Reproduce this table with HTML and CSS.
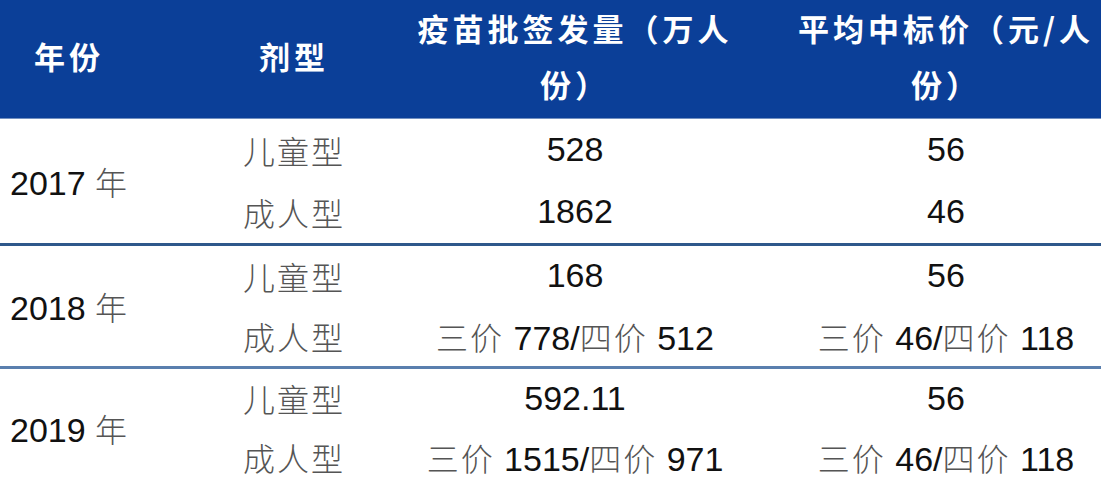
FILE: index.html
```html
<!DOCTYPE html>
<html lang="zh">
<head>
<meta charset="utf-8">
<link rel="stylesheet" href="styles.css">
</head>
<body>
<table class="tbl">
  <colgroup>
    <col class="c1"><col class="c2"><col class="c3"><col class="c4">
  </colgroup>
  <thead>
    <tr>
      <th class="h1">年份</th>
      <th class="h2">剂型</th>
      <th class="h3">疫苗批签发量（万人<br>份）</th>
      <th class="h4">平均中标价（元/人<br>份）</th>
    </tr>
  </thead>
  <tbody class="g1">
    <tr>
      <td class="year" rowspan="2">2017 <span class="cn">年</span></td>
      <td class="type"><span class="cn">儿童型</span></td>
      <td class="v3">528</td>
      <td class="v4">56</td>
    </tr>
    <tr>
      <td class="type"><span class="cn">成人型</span></td>
      <td class="v3">1862</td>
      <td class="v4">46</td>
    </tr>
  </tbody>
  <tbody class="g2">
    <tr>
      <td class="year" rowspan="2">2018 <span class="cn">年</span></td>
      <td class="type"><span class="cn">儿童型</span></td>
      <td class="v3">168</td>
      <td class="v4">56</td>
    </tr>
    <tr>
      <td class="type"><span class="cn">成人型</span></td>
      <td class="v3"><span class="cn">三价</span> 778/<span class="cn">四价</span> 512</td>
      <td class="v4"><span class="cn">三价</span> 46/<span class="cn">四价</span> 118</td>
    </tr>
  </tbody>
  <tbody class="g3">
    <tr>
      <td class="year" rowspan="2">2019 <span class="cn">年</span></td>
      <td class="type"><span class="cn">儿童型</span></td>
      <td class="v3">592.11</td>
      <td class="v4">56</td>
    </tr>
    <tr>
      <td class="type"><span class="cn">成人型</span></td>
      <td class="v3"><span class="cn">三价</span> 1515/<span class="cn">四价</span> 971</td>
      <td class="v4"><span class="cn">三价</span> 46/<span class="cn">四价</span> 118</td>
    </tr>
  </tbody>
</table>
</body>
</html>
```
FILE: styles.css
```css
html, body {
  margin: 0;
  padding: 0;
  background: #ffffff;
}

.tbl {
  width: 1101px;
  border-collapse: collapse;
  table-layout: fixed;
  font-family: "Liberation Sans", Arial, "Noto Sans CJK SC", sans-serif;
}

.c1 { width: 140px; }
.c2 { width: 250px; }
.c3 { width: 370px; }
.c4 { width: 341px; }

.tbl th {
  box-sizing: border-box;
  height: 118px;
  background: #0b3f98;
  color: #ffffff;
  font-family: "Noto Sans CJK SC", sans-serif;
  font-weight: 700;
  font-size: 31px;
  letter-spacing: 4px;
  line-height: 56px;
  text-align: center;
  vertical-align: middle;
  padding: 0 0 5px 0;
  border-bottom: 1px solid #7390c0;
}

.tbl .h1 { padding-right: 2px; }
.tbl .h2 { padding-left: 58px; }
.tbl .h4 { padding-left: 31px; }

.tbl td {
  padding: 0;
  height: 62px;
  font-size: 34px;
  color: #111111;
  text-align: center;
  vertical-align: middle;
  white-space: nowrap;
}

.g2 td { height: 60px; }
.g3 td { height: 59px; }

.g2 tr:first-child td {
  border-top: 3px solid #2f588b;
}

.g3 tr:first-child td {
  border-top: 3px solid #5a7fae;
}

.tbl .year {
  text-align: left;
  padding-left: 10px;
}

.tbl .type {
  padding-left: 58px;
  letter-spacing: 3px;
  font-size: 32px;
}

.tbl .v4 {
  padding-left: 31px;
}

.cn {
  font-family: "Noto Sans CJK SC", sans-serif;
  font-weight: 300;
  font-size: 32px;
  color: #555555;
  letter-spacing: 2px;
}
```
